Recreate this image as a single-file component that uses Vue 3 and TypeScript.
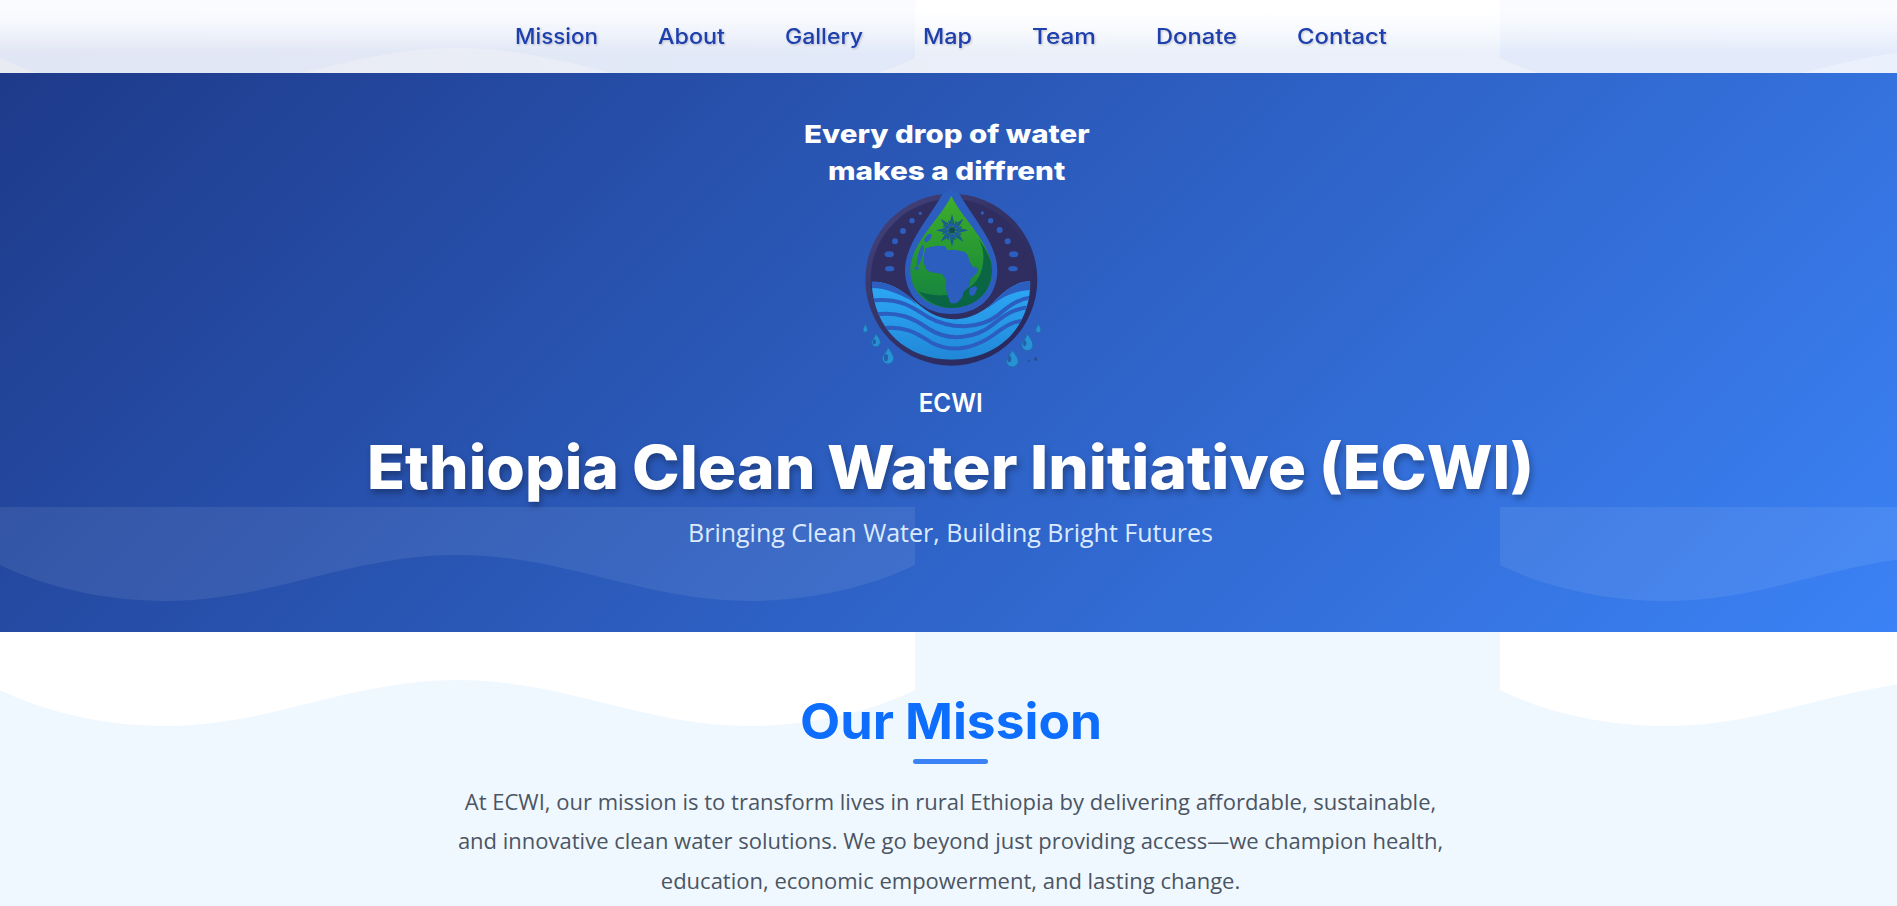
<script setup lang="ts">
interface Word {
  label: string
  x: number
  width: number
}

interface NavLink {
  label: string
  width: number
}

const links: NavLink[] = [
  { label: 'Mission', width: 83 },
  { label: 'About', width: 67 },
  { label: 'Gallery', width: 78 },
  { label: 'Map', width: 49 },
  { label: 'Team', width: 64 },
  { label: 'Donate', width: 81 },
  { label: 'Contact', width: 90 },
]

const titleWords: Word[] = [
  { label: 'Ethiopia', x: -3, width: 252 },
  { label: 'Clean', x: 262, width: 183.5 },
  { label: 'Water', x: 457, width: 190.5 },
  { label: 'Initiative', x: 660, width: 276 },
  { label: '(ECWI)', x: 949, width: 215 },
]

const wave =
  'M0 0V58C45 80 105 94 166 94C270 94 350 48 457 48C564 48 645 94 749 94C810 94 870 80 915 58V0Z'

const rays = [0, 45, 90, 135, 180, 225, 270, 315]
const waveOffsets = [0, 1500]
</script>

<template>
  <div class="page">
    <nav class="nav">
      <svg class="wave" viewBox="0 0 1897 100" aria-hidden="true">
        <path v-for="x in waveOffsets" :key="x" :d="wave" :transform="`translate(${x} 0)`" />
      </svg>
      <ul class="nav-list">
        <li v-for="link in links" :key="link.label">
          <a href="#">
            <svg :width="link.width" height="32" class="nav-text">
              <text x="0" y="23" :textLength="link.width" lengthAdjust="spacingAndGlyphs">{{ link.label }}</text>
            </svg>
          </a>
        </li>
      </ul>
    </nav>

    <header class="hero">
      <svg class="wave" viewBox="0 0 1897 100" aria-hidden="true">
        <path v-for="x in waveOffsets" :key="x" :d="wave" :transform="`translate(${x} 0)`" />
      </svg>
      <svg class="logo" width="345" height="300" viewBox="0 0 1035 900" role="img" aria-label="ECWI logo">
        <defs>
          <linearGradient id="leaf" x1="0" y1="0" x2="0" y2="1">
            <stop offset="0" stop-color="#3fae2c" />
            <stop offset=".6" stop-color="#239434" />
            <stop offset="1" stop-color="#158143" />
          </linearGradient>
          <linearGradient id="sea" x1="0" y1="0" x2="0" y2="1">
            <stop offset="0" stop-color="#2ea9f5" />
            <stop offset=".6" stop-color="#2596e5" />
            <stop offset="1" stop-color="#2186d6" />
          </linearGradient>
          <linearGradient id="ring" x1="0" y1="0" x2="1" y2="1">
            <stop offset="0" stop-color="#454680" />
            <stop offset=".4" stop-color="#363467" />
            <stop offset="1" stop-color="#25265b" />
          </linearGradient>
          <clipPath id="bowl"><path d="M65 306C100 302 145 322 180 352C225 392 260 417 310 418C370 417 415 385 440 356C475 322 505 304 541 304C541 450 440 538 304 539C170 538 70 450 65 306Z" /></clipPath>
        </defs>
        <g class="slogan">
          <text x="81" y="146" textLength="857" lengthAdjust="spacingAndGlyphs">Every drop of water</text>
          <text x="153" y="258" textLength="712" lengthAdjust="spacingAndGlyphs">makes a diffrent</text>
        </g>
        <g transform="translate(219 258)">
          <circle cx="304" cy="299" r="258" fill="url(#ring)" />
          <circle cx="304" cy="299" r="242" fill="#302e61" />
          <path class="hole" d="M279 40L304 30L327 40C365 109 442 190 442 270C442 350 386 402 304 402C222 402 165 350 165 270C165 190 241 110 279 40Z" />
          <path d="M304 47C274 112 181 190 181 270C181 340 234 383 304 384C373 383 426 340 426 270C426 190 333 112 304 47Z" fill="url(#leaf)" />
          <path d="M384 175C414 220 400 290 365 317C317 350 258 354 205 334C236 372 273 384 304 384C373 383 426 340 426 270C426 236 407 206 384 175Z" fill="#075f45" opacity=".85" />
          <path class="hole" d="M226 205L260 197L286 199L292 211L312 209L344 215L354 226L358 243L368 260L385 264L380 280L361 298L359 318L341 335L335 355L319 370L302 370L292 344L287 322L289 300L275 281L252 278L232 273L221 250L222 226Z" />
          <path class="hole" d="M360 325L377 318L382 325L374 344L363 348L357 339Z" />
          <g transform="translate(306 151)">
            <g v-for="angle in rays" :key="angle" :transform="`rotate(${angle})`">
              <path d="M0-41L5-22L0-12L-5-22Z" fill="#17754f" stroke="#1d5a94" stroke-width="4" />
              <path d="M13-28L5-8" stroke="#1d5a94" stroke-width="4" />
            </g>
            <circle r="18" fill="none" stroke="#205ca7" stroke-width="5" />
            <circle r="9" fill="#124b55" />
          </g>
          <g class="hole">
            <ellipse cx="234" cy="174" rx="7" ry="15" transform="rotate(38 234 174)" />
            <ellipse cx="211" cy="226" rx="7" ry="32" transform="rotate(15 211 226)" />
            <circle cx="200" cy="265" r="6" />
            <circle cx="211" cy="100" r="5" /><circle cx="186" cy="122" r="8" />
            <circle cx="159" cy="153" r="9" /><circle cx="135" cy="184" r="9" />
            <ellipse cx="118" cy="223" rx="14" ry="9" /><ellipse cx="119" cy="266" rx="14" ry="8" />
            <circle cx="397" cy="99" r="5" /><circle cx="422" cy="122" r="8" />
            <circle cx="449" cy="150" r="9" /><circle cx="473" cy="184" r="9" />
            <ellipse cx="491" cy="223" rx="14" ry="9" /><ellipse cx="489" cy="266" rx="14" ry="8" />
          </g>
          <g clip-path="url(#bowl)">
            <rect x="55" y="300" width="500" height="245" fill="url(#sea)" />
            <path class="hole" d="M60 298V324C105 322 145 342 182 360L200 375C170 325 120 298 60 298Z" />
            <path class="hole" d="M410 388C445 358 490 329 550 330V298C490 302 445 340 410 388Z" />
            <g class="current">
              <path d="M60 362C155 352 190 384 232 410C305 450 389 447 442 407C480 374 512 353 550 352" />
              <path d="M70 404C145 393 190 414 232 444C300 490 381 472 428 434C468 401 500 381 550 382" />
              <path d="M90 446C165 434 202 461 245 488C318 526 390 494 430 465C466 438 489 422 530 422" />
            </g>
          </g>
          <g fill="#2793d6" stroke="#206dae" stroke-width="3">
            <path d="M46 432C43 443 38 445 39 450A7 7 0 0 0 53 450Q53 444 46 432Z" />
            <path d="M78 461C74 474 65 478 65 487A13 13 0 0 0 91 487Q91 478 78 461Z" />
            <path d="M114 502C109 519 97 525 97 535A17 17 0 0 0 131 535Q131 525 114 502Z" />
            <path d="M565 431C562 442 556 445 557 450A8 8 0 0 0 573 450Q573 444 565 431Z" />
            <path d="M532 461C527 479 515 484 515 495A17 17 0 0 0 549 495Q549 484 532 461Z" />
            <path d="M486 510C481 528 469 533 469 543A18 18 0 0 0 505 543Q505 532 486 510Z" />
          </g>
          <g fill="#2460a8">
            <ellipse cx="73" cy="485" rx="5" ry="8" /><ellipse cx="108" cy="533" rx="6" ry="11" />
            <ellipse cx="524" cy="490" rx="5" ry="9" /><ellipse cx="478" cy="537" rx="6" ry="10" />
          </g>
          <g fill="#264d8c">
            <circle cx="557" cy="537" r="5" /><circle cx="537" cy="542" r="3" />
          </g>
        </g>
        <text class="acronym" x="425" y="953" textLength="192" lengthAdjust="spacingAndGlyphs">ECWI</text>
      </svg>
      <h1>
        <svg class="title" width="1160" height="80">
          <text
            v-for="word in titleWords"
            :key="word.label"
            :x="word.x"
            y="57"
            :textLength="word.width"
            lengthAdjust="spacingAndGlyphs"
          >{{ word.label }}</text>
        </svg>
      </h1>
      <p class="tagline">Bringing Clean Water, Building Bright Futures</p>
    </header>

    <main class="mission">
      <svg class="wave" viewBox="0 0 1897 100" aria-hidden="true">
        <path v-for="x in waveOffsets" :key="x" :d="wave" :transform="`translate(${x} 0)`" />
      </svg>
      <h2>
        <svg class="section-title" width="300" height="64">
          <text x="-1" y="47" textLength="94" lengthAdjust="spacingAndGlyphs">Our</text>
          <text x="104" y="47" textLength="197" lengthAdjust="spacingAndGlyphs">Mission</text>
        </svg>
      </h2>
      <p class="copy">
        At ECWI, our mission is to transform lives in rural Ethiopia by delivering affordable, sustainable,
        and innovative clean water solutions. We go beyond just providing access—we champion health,
        education, economic empowerment, and lasting change.
      </p>
    </main>
  </div>
</template>

<style>
body {
  margin: 0;
  overflow: hidden;
}
</style>

<style scoped>
.page {
  height: 906px;
  overflow: hidden;
  background: #f0f8ff;
  font-family: 'Open Sans', sans-serif;
}

.wave {
  position: absolute;
  left: 0;
  width: 1897px;
  height: 100px;
}

.nav {
  position: relative;
  height: 73px;
  overflow: hidden;
  background:
    linear-gradient(180deg, #fff 0, #fff 10px, rgba(255, 255, 255, 0) 50px),
    linear-gradient(90deg, #e9ebf3, #eaeff9 55%, #ebf1fc);
}

.nav .wave {
  top: 0;
  fill: rgba(187, 208, 250, 0.17);
}

.nav::after {
  content: '';
  position: absolute;
  inset: 0;
  background: linear-gradient(180deg, rgba(255, 255, 255, 0.55) 0, rgba(255, 255, 255, 0.55) 14px, rgba(255, 255, 255, 0) 54px);
}

.nav-list {
  position: relative;
  z-index: 1;
  display: flex;
  justify-content: center;
  gap: 60px;
  height: 73px;
  margin: 0;
  padding: 0 0 0 5px;
  align-items: center;
  list-style: none;
}

.nav a {
  display: block;
  text-decoration: none;
}

svg text {
  font-family: Inter, sans-serif;
}

.nav-text {
  display: block;
  overflow: visible;
  fill: #1e40af;
  font-size: 21px;
  font-weight: 500;
  filter: drop-shadow(1px 1px 1px rgba(0, 0, 0, 0.2));
}

.hero {
  position: relative;
  display: flex;
  flex-direction: column;
  align-items: center;
  height: 559px;
  background: linear-gradient(135deg, #1e3a8a, #3b82f6);
}

.hero .wave {
  top: 434px;
  fill: rgba(255, 255, 255, 0.08);
}

.logo {
  position: relative;
  display: block;
  margin: 21px 0 0 2px;
  overflow: visible;
}

.slogan text {
  fill: #fff;
  font-size: 75px;
  font-weight: 800;
}

.acronym {
  fill: #fff;
  font-size: 75px;
  font-weight: 600;
}

.hole {
  fill: #2b5ebf;
}

.current {
  fill: none;
  stroke: #2b5ebf;
  stroke-width: 12;
}

h1,
h2,
p {
  margin: 0;
}

h1 {
  position: relative;
  height: 80px;
  margin: 38px 0 0 3px;
}

.title {
  display: block;
  overflow: visible;
  fill: #fff;
  font-size: 60px;
  font-weight: 800;
  filter: drop-shadow(2px 4px 3px rgba(0, 0, 0, 0.3));
}

.tagline {
  position: relative;
  margin: 2px 0 0 4px;
  color: #dbeafe;
  font-size: 25px;
  line-height: 36px;
}

.mission {
  position: relative;
  display: flex;
  flex-direction: column;
  align-items: center;
}

.mission .wave {
  top: 0;
  fill: #fff;
}

h2 {
  position: relative;
  display: flex;
  flex-direction: column;
  align-items: center;
  margin: 60px 0 0 4px;
}

h2::after {
  content: '';
  width: 75px;
  height: 5px;
  margin-top: 3px;
  border-radius: 3px;
  background: #3b82f6;
}

.section-title {
  display: block;
  overflow: visible;
  fill: #0d6efd;
  font-size: 49px;
  font-weight: 700;
}

.copy {
  position: relative;
  width: 1000px;
  margin: 18px 0 0 4px;
  color: #4b5563;
  font-size: 22px;
  line-height: 39.4px;
  text-align: center;
}
</style>
